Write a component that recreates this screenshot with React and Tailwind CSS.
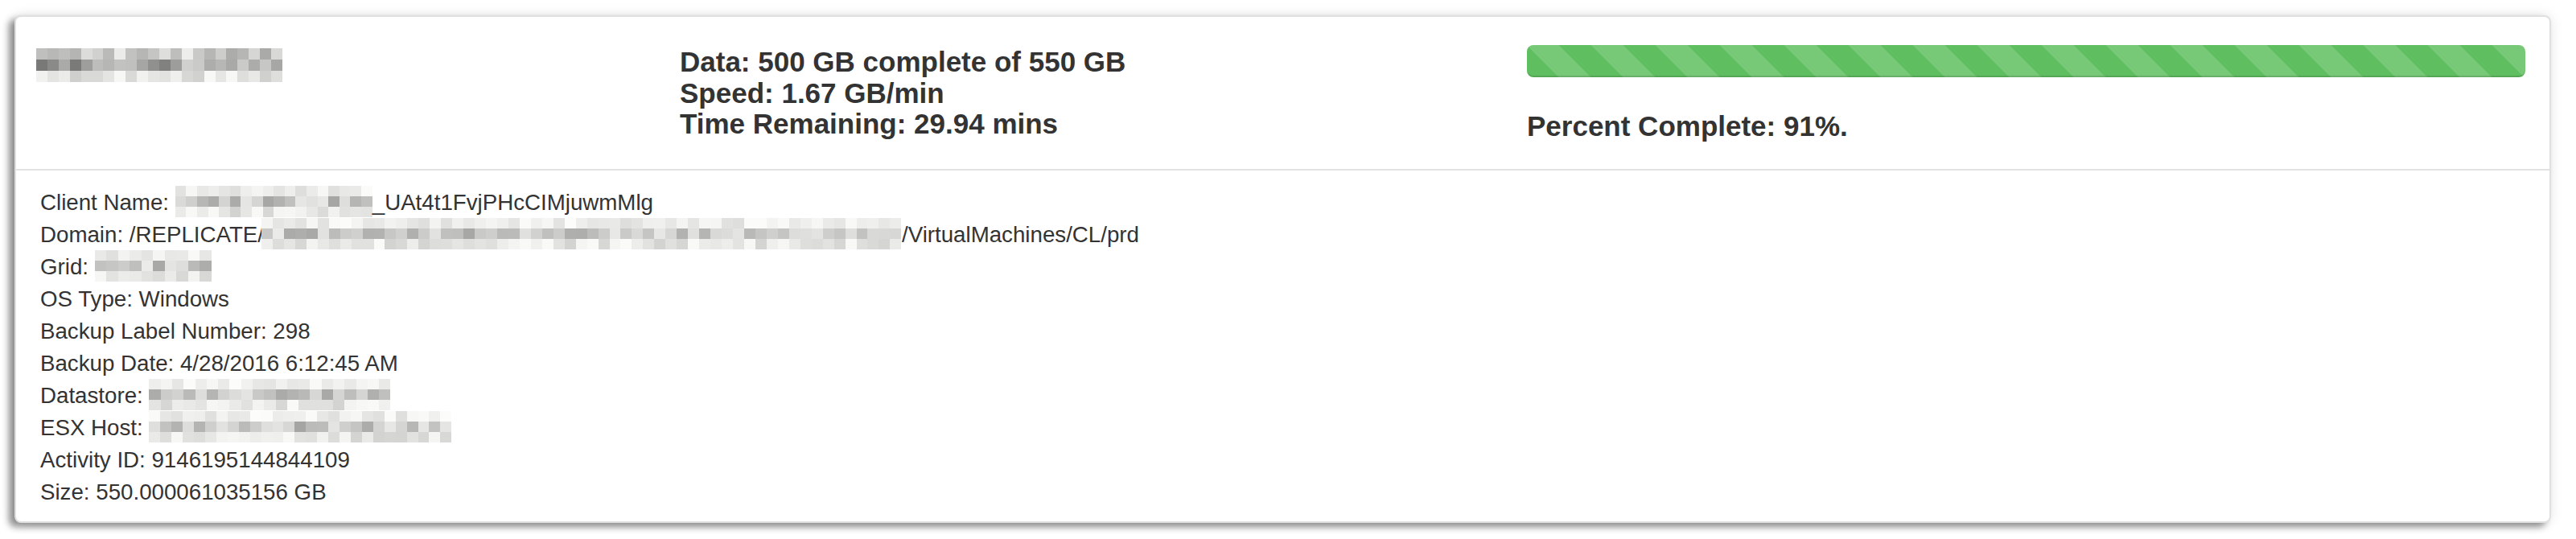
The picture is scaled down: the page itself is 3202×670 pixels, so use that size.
import React from 'react';

// pixelated "redacted" blocks, shaded from a small hash so they look like the censored text
function shade(seed, r, c, dark) {
  const h = Math.abs(Math.sin(seed * 91.7 + r * 13.3 + c * 7.9) * 43758.5) % 1;
  let v;
  if (r === 0) v = dark ? 170 + h * 70 : 222 + h * 30;
  else if (r === 1) v = dark ? 118 + h * 90 : 165 + h * 70;
  else v = dark ? 205 + h * 45 : 210 + h * 40;
  v = Math.round(Math.min(252, v));
  return `rgb(${v},${v},${Math.max(0, v - 2)})`;
}

function Mosaic({ width, seed = 1, rows = 3, cell = 14, rowH = 13, dark = false, className = '' }) {
  const cols = Math.max(1, Math.round(width / cell));
  const cw = width / cols;
  return (
    <span className={`inline-flex flex-col shrink-0 ${className}`} style={{ width }}>
      {Array.from({ length: rows }).map((_, r) => (
        <span key={r} className="flex" style={{ height: rowH }}>
          {Array.from({ length: cols }).map((_, c) => (
            <span key={c} style={{ width: cw, background: shade(seed, r, c, dark) }} />
          ))}
        </span>
      ))}
    </span>
  );
}

function Line({ children }) {
  return <div className="flex items-center h-[40px] whitespace-nowrap">{children}</div>;
}

export default function App() {
  return (
    <div className="min-h-screen bg-white pt-[19px] pl-[18px] pr-[31px] pb-[20px] font-['Liberation_Sans',Arial,sans-serif] text-[#333]">
      <div className="bg-white border-2 border-[#e0e0e0] rounded-[8px] shadow-[-7px_5px_8px_rgba(0,0,0,0.42),0_0_16px_rgba(0,0,0,0.10)]">
        {/* heading */}
        <div className="grid grid-cols-[795px_1053px_1fr] px-[30px] pt-[35px] h-[191px] border-b-2 border-[#e3e3e3]">
          <div className="pt-[1px]">
            <Mosaic width={306} seed={3} dark className="-ml-[5px]" rowH={14} />
          </div>
          <div className="pt-[2px] text-[35px] font-bold leading-[38.5px]">
            <div>Data: 500 GB complete of 550 GB</div>
            <div>Speed: 1.67 GB/min</div>
            <div>Time Remaining: 29.94 mins</div>
          </div>
          <div>
            <div className="h-[40px] rounded-[8px] bg-[#5fbf60] bg-[linear-gradient(45deg,rgba(255,255,255,0.15)_25%,transparent_25%,transparent_50%,rgba(255,255,255,0.15)_50%,rgba(255,255,255,0.15)_75%,transparent_75%,transparent)] bg-size-[80px_80px] shadow-[inset_0_-2px_0_rgba(0,0,0,0.12)]" />
            <div className="mt-[42px] text-[35px] font-bold leading-[38.5px]">Percent Complete: 91%.</div>
          </div>
        </div>

        {/* body */}
        <div className="pl-[30px] pt-[20px] pb-[16px] text-[27.7px] leading-[40px]">
          <Line>
            <span>Client Name:&nbsp;</span>
            <Mosaic width={245} seed={5} className="-mt-[4px]" />
            <span>_UAt4t1FvjPHcCIMjuwmMlg</span>
          </Line>
          <Line>
            <span>Domain: /REPLICATE/</span>
            <Mosaic width={796} seed={8} className="-mt-[4px] -ml-[3px]" />
            <span>/VirtualMachines/CL/prd</span>
          </Line>
          <Line>
            <span>Grid:&nbsp;</span>
            <Mosaic width={145} seed={11} className="-mt-[4px]" />
          </Line>
          <Line>
            <span>OS Type: Windows</span>
          </Line>
          <Line>
            <span>Backup Label Number: 298</span>
          </Line>
          <Line>
            <span>Backup Date: 4/28/2016 6:12:45 AM</span>
          </Line>
          <Line>
            <span>Datastore:&nbsp;</span>
            <Mosaic width={300} seed={14} className="-mt-[4px]" />
          </Line>
          <Line>
            <span>ESX Host:&nbsp;</span>
            <Mosaic width={376} seed={17} className="-mt-[4px]" />
          </Line>
          <Line>
            <span>Activity ID: 9146195144844109</span>
          </Line>
          <Line>
            <span>Size: 550.000061035156 GB</span>
          </Line>
        </div>
      </div>
    </div>
  );
}
